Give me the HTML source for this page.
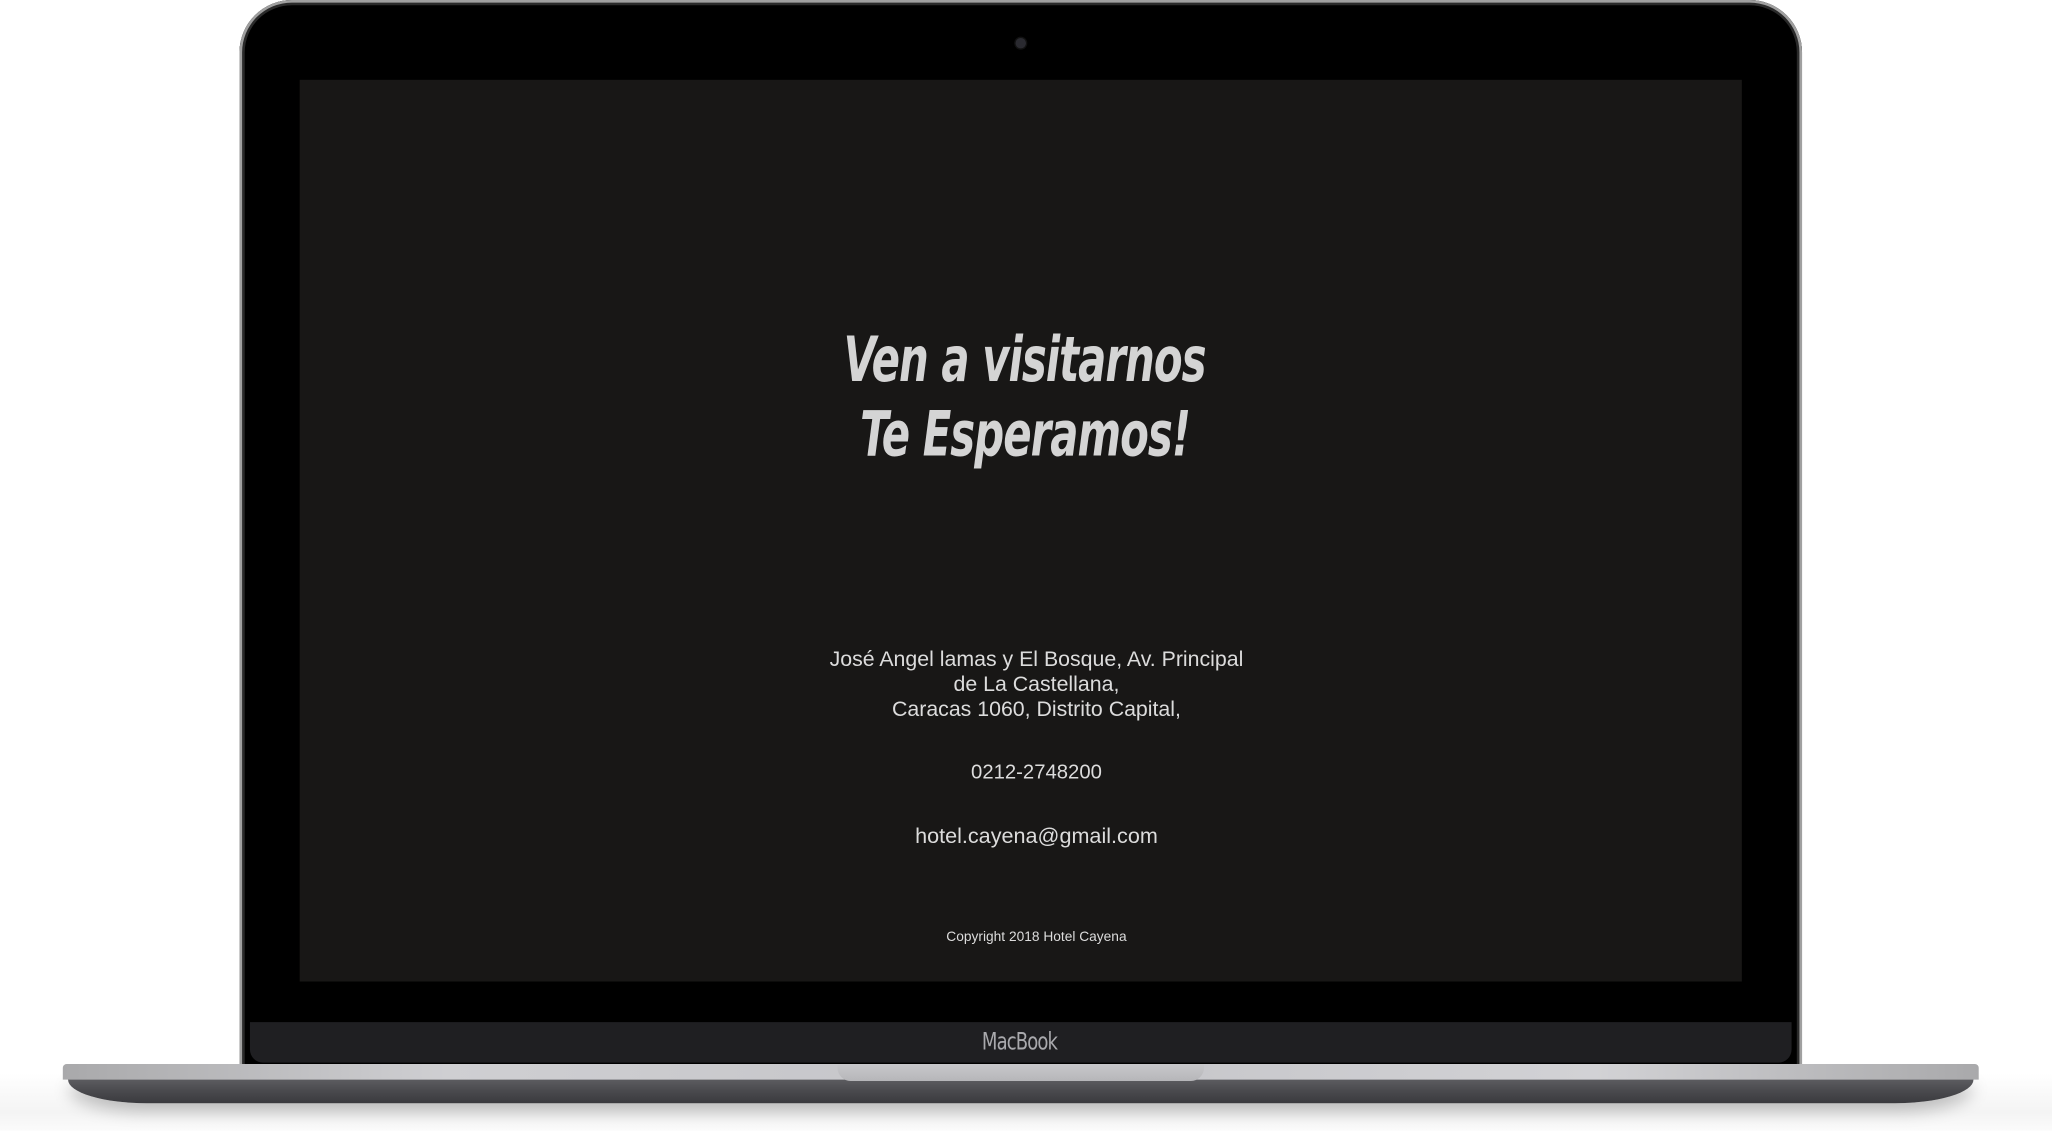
<!DOCTYPE html>
<html><head><meta charset="utf-8">
<style>
html,body{margin:0;padding:0;background:#fff;overflow:hidden}
body{width:2052px;height:1131px;position:relative}
#w{position:absolute;left:0;top:0;width:1568px;height:864px;transform:scale(1.30867);transform-origin:0 0;background:linear-gradient(#fff 0,#fff 820px,#f4f4f4 850px,#fbfbfb 864px)}
.abs{position:absolute}
#lid{left:183px;top:0;width:1194px;height:820px;border-radius:40px 40px 6px 6px;background:#000;box-shadow:inset 0 0 0 2px #a0a0a0,inset 0 0 0 4px #2a2a2a}
#screen{left:229px;top:61px;width:1102px;height:689px;background:#181716}
#cam{left:776px;top:29px;width:8px;height:8px;border-radius:50%;background:#2a2a30;box-shadow:0 0 0 1px #111}
#chin{left:191px;top:781px;width:1178px;height:31px;background:#1f1f22;border-radius:0 0 10px 10px}
#mb{left:-5px;width:1568px;top:786px;text-align:center;color:#a9a9ad;font:18px "DejaVu Sans Condensed","Liberation Sans",sans-serif;letter-spacing:-0.8px;transform:scaleX(0.85)}
#base{left:48px;top:813px;width:1464px;height:12px;background:linear-gradient(90deg,#a9a9ab,#cfcfd2 20%,#c4c4c8 50%,#d2d2d5 80%,#a9a9ab);border-radius:3px 3px 0 0}
#bot{left:52px;top:824px;width:1456px;height:19px;background:linear-gradient(#5e5e62,#4a4a4e 50%,#3a3a3e);border-radius:0 0 60px 60px/0 0 18px 18px;box-shadow:0 6px 12px rgba(0,0,0,.25)}
#notch{left:640px;top:813px;width:280px;height:13px;background:linear-gradient(#c8c8cb,#b6b6b9);border-radius:0 0 10px 10px}
.t{position:absolute;left:8px;width:1568px;text-align:center;color:#dcdcdc;font-family:"Liberation Sans",sans-serif}
.h{color:#d4d4d4;font:italic bold 48px "DejaVu Sans Condensed","DejaVu Sans",sans-serif;letter-spacing:-1px}
.h span{display:inline-block;transform:scaleX(0.74)}
</style></head><body>
<div id="w">
<div class="abs" id="lid"></div>
<div class="abs" id="screen"></div>
<div class="abs" id="cam"></div>
<div class="abs" id="chin"></div>
<div class="abs" id="mb">MacBook</div>
<div class="abs" id="bot"></div>
<div class="abs" id="base"></div>
<div class="abs" id="notch"></div>
<div class="t h" style="top:247px;left:-1px"><span>Ven a visitarnos</span></div>
<div class="t h" style="top:304px;left:-1px"><span>Te Esperamos!</span></div>
<div class="t" style="top:495px;font-size:16.3px;line-height:19px">José Angel lamas y El Bosque, Av. Principal<br>de La Castellana,<br>Caracas 1060, Distrito Capital,</div>
<div class="t" style="top:582px;font-size:15.5px">0212-2748200</div>
<div class="t" style="top:630px;font-size:16.5px">hotel.cayena@gmail.com</div>
<div class="t" style="top:710px;font-size:10.5px">Copyright 2018 Hotel Cayena</div>
</div>
</body></html>
